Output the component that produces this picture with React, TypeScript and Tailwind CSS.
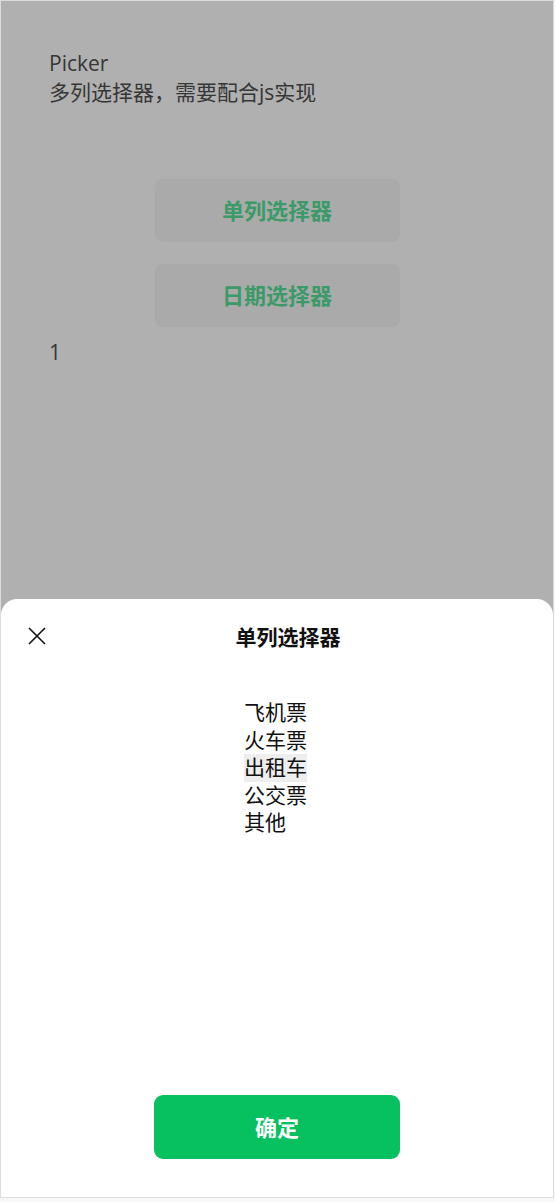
import React from "react";

const font = { fontFamily: '"Open Sans", "Noto Sans CJK SC", sans-serif' };

export default function App() {
  const items = ["飞机票", "火车票", "出租车", "公交票", "其他"];
  return (
    <div className="w-[555px] h-[1202px] bg-[#f7f7f7]" style={font}>
      <div className="relative w-[554px] h-[1198px] border border-[#dcdcdc] bg-[#b0b0b0] overflow-hidden">
        <div className="pt-[48px] pl-[48px] text-[21px] leading-[29px] text-[#363636]">
          <div>Picker</div>
          <div>多列选择器，需要配合js实现</div>
        </div>
        <div className="mt-[72px] flex flex-col items-center gap-[22px]">
          <div className="w-[245px] h-[63px] rounded-[8px] bg-[#aaaaaa] flex items-center justify-center text-[22px] font-bold text-[#3a9a68]">
            单列选择器
          </div>
          <div className="w-[245px] h-[63px] rounded-[8px] bg-[#aaaaaa] flex items-center justify-center text-[22px] font-bold text-[#3a9a68]">
            日期选择器
          </div>
        </div>
        <div className="pl-[48px] mt-[11px] text-[21px] leading-[29px] text-[#363636]">1</div>

        <div className="absolute left-0 right-0 top-[598px] bottom-0 bg-white rounded-t-[16px] flex flex-col">
          <div className="relative h-[78px] flex items-center justify-center">
            <svg
              className="absolute left-[27px] top-[28px]"
              width="18"
              height="18"
              viewBox="0 0 18 18"
              fill="none"
              stroke="#111"
              strokeWidth="1.6"
            >
              <path d="M1 1 L17 17 M17 1 L1 17" />
            </svg>
            <div className="ml-[22px] text-[21px] font-bold text-[#111]">单列选择器</div>
          </div>
          <div className="flex-1 flex flex-col items-center pt-[22px]">
            <div className="ml-[-3px] flex flex-col items-start text-[21px] leading-[27.5px] text-[#111]">
              {items.map((t) => (
                <div key={t} className={t === "出租车" ? "bg-[#eeeeee]" : ""}>
                  {t}
                </div>
              ))}
            </div>
          </div>
          <div className="flex justify-center pb-[38px]">
            <div className="w-[246px] h-[64px] rounded-[9px] bg-[#07c160] flex items-center justify-center text-[22px] font-bold text-white">
              确定
            </div>
          </div>
        </div>
      </div>
    </div>
  );
}
